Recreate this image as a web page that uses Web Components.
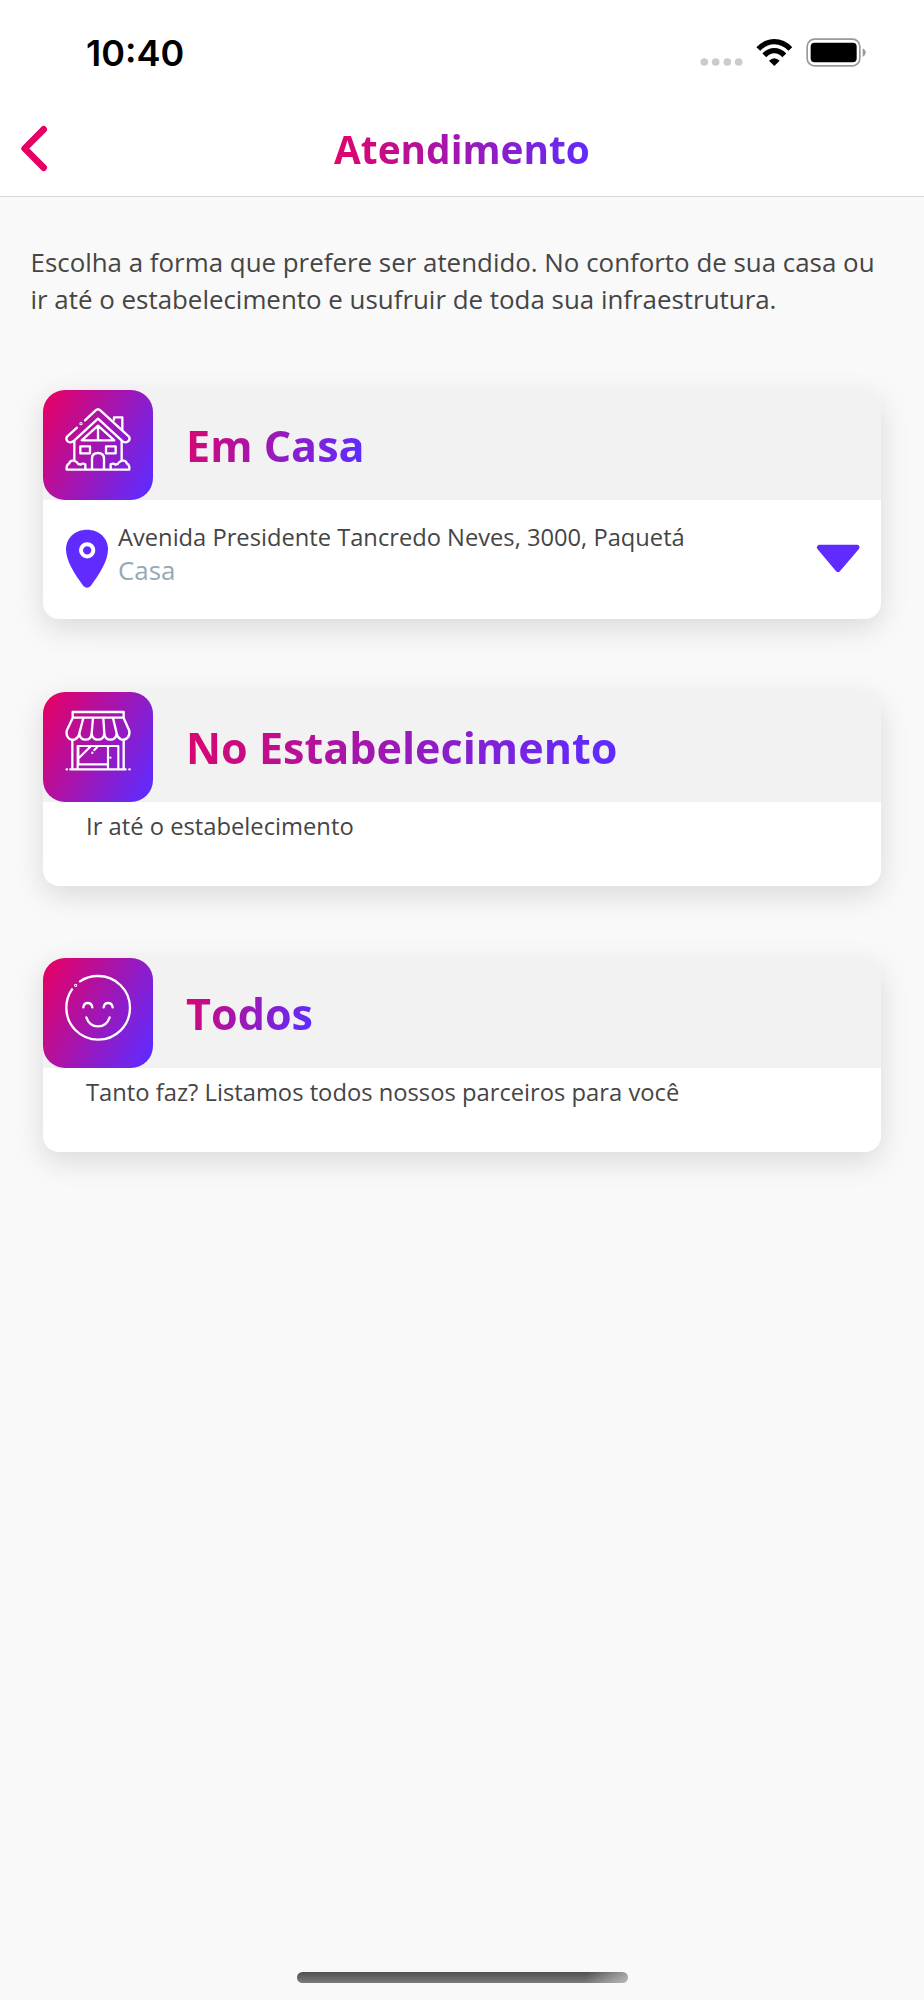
<!DOCTYPE html>
<html lang="pt-BR">
<head>
<meta charset="utf-8">
<title>Atendimento</title>
<style>
html,body{margin:0;background:#f9f9f9}
body{width:924px;height:2000px;overflow:hidden;font-family:"Open Sans","Noto Sans",sans-serif}
</style>
</head>
<body>
<app-screen></app-screen>
<script>
const define=(name,html)=>customElements.define(name,class extends HTMLElement{
  constructor(){super();this.attachShadow({mode:'open'}).innerHTML=html;}
});

define('status-bar',`<style>
:host{display:flex;align-items:center;justify-content:space-between;height:106px;box-sizing:border-box;padding:0 56.5px 0 86px;background:#fff;color:#000}
time{font:600 36px/44px Inter,sans-serif;}
svg{display:block}
</style><time>10:40</time>
<svg width="168" height="32" viewBox="0 0 504 96">
<g fill="#cbcbcb"><circle cx="13" cy="75" r="11.5"/><circle cx="47" cy="75" r="11.5"/><circle cx="82" cy="75" r="11.5"/><circle cx="116" cy="75" r="11.5"/></g>
<g fill="none" stroke="#000" stroke-width="16"><path d="M175 36Q196 14 223 14Q250 14 271 36"/><path d="M193 55Q206 41 223 41Q240 41 253 55"/></g>
<path d="M207 71Q223 56 239 71L223 87Z"/>
<rect x="321.500" y="6.500" width="158" height="80" rx="22" fill="none" stroke="#999" stroke-width="5"/>
<rect x="332" y="17" width="138" height="59" rx="12"/>
<path d="M488 34Q497 38 497 46Q497 55 488 60Z" fill="#999"/>
</svg>`);

define('nav-bar',`<style>
:host{display:grid;grid-template-columns:80px 1fr 80px;height:90px;background:#fff;border-bottom:1px solid #d8d8d8}
svg{display:block}
h1{margin:0;justify-self:center;align-self:start;font-size:38.8px;line-height:54px;padding-top:16px;font-weight:700;white-space:nowrap}
h1 span{background:linear-gradient(90deg,#e0046a,#5f2bff);-webkit-background-clip:text;background-clip:text;color:transparent}
</style><svg width="80" height="90" viewBox="0 318 240 270"><path d="M131 388L74 445.500L131 503" fill="none" stroke="#e60064" stroke-width="20" stroke-linecap="round" stroke-linejoin="round"/></svg>
<h1><span><slot></slot></span></h1>`);

define('option-card',`<style>
:host{display:block;border-radius:16px;background:#fff;box-shadow:0 9px 30px rgba(0,0,0,.13)}
header{display:flex;height:110px;background:#f2f2f2;border-radius:16px 16px 0 0}
.tile{width:110px;height:110px;border-radius:22px;background:linear-gradient(118deg,#e60064 3%,#5f2bff 95%)}
h2{margin:0 0 0 33px;font-size:43.1px;line-height:60px;padding-top:26px;font-weight:700;white-space:nowrap}
h2 span{background:linear-gradient(110deg,#dc056c,#5f2bff 94%);-webkit-background-clip:text;background-clip:text;color:transparent}
</style><header><div class="tile"><slot name="icon"></slot></div><h2><span><slot name="title"></slot></span></h2></header><slot></slot>`);

const icon=(name,vb,body)=>define(name,`<style>:host{display:block}svg{display:block;fill:none;stroke:#fff;stroke-width:7;stroke-linecap:round;stroke-linejoin:round}</style><svg width="110" height="110" viewBox="${vb}">${body}</svg>`);
icon('icon-house','40 30 330 330',`
<path d="M166 121L198 91Q205 84 212 91L297 169Q302 175 298 182Q289 191 279 184L205 116L131 184Q120 191 112 182Q108 175 113 169L142 143"/>
<circle cx="154" cy="131" r="1.500"/>
<path d="M253 119V112H278V148M134 184V241M276 184V241M205 137V181M205 137L156 181H254Z"/>
<path d="M152 199H181V220H152ZM229 199H258V220H229Z"/>
<path d="M187 268V236Q187 219 205 219Q223 219 223 236V268M112 269H299Q301 255 291 250Q289 240 278 242Q268 244 264 252Q259 253 257 254Q251 248 243 253V266M111 269Q109 255 119 250Q121 240 132 242Q142 244 146 252Q151 253 153 254Q159 248 167 253V266"/>`);
icon('icon-store','40 36 330 330',`
<path d="M129 96H282V113H129ZM129 114L111 152Q109 170 119 176Q128 181 136 178Q147 173 149 160Q151 179 168 179Q184 179 186 160Q188 179 205 179Q222 179 224 160Q226 179 242 179Q259 179 261 160Q263 173 274 178Q285 181 293 174Q301 166 299 152L282 114M161 114L149 160M190 114L186 160M221 114L224 160M250 114L261 160"/>
<path d="M128 181V266M282 181V266M122 268H288M111 268H112M299 268H300" />
<path d="M144 266V198H266V266M144 253H233M235 199V266M147 235L181 201M188 218L188 219M194 210L202 202M242 233H242.500M146 200V252" stroke-width="6.500"/>`);
icon('icon-smile','40 24 330 330',`
<path d="M151 94Q174 78 205 78A95.500 95.500 0 1 1 110 173Q110 142 127 118"/><circle cx="138" cy="106" r="1.500"/>
<path d="M161 172Q163 159 174 159Q186 159 188 172M222 172Q224 159 235 159Q247 159 249 172M170 202Q179 229 205 229Q231 229 240 202"/>`);

define('address-row',`<style>
:host{display:grid;grid-template-columns:75px 1fr 86px;height:119px;color:#454545}
svg{display:block}
.t{padding-top:20px;white-space:nowrap}
.a{font-size:23.7px;line-height:34px}.b{font-size:25.9px;line-height:32px;color:#94aab5}
</style><svg width="75" height="119" viewBox="129 30 225 357"><path d="M261 119C297 119 324 144 324 178C324 212 299 252 272 288Q261 299 250 288C223 252 198 212 198 178C198 144 225 119 261 119Z" fill="#5f2bff"/><circle cx="261.500" cy="181" r="18.500" fill="none" stroke="#fff" stroke-width="12"/></svg>
<div class="t"><div class="a"><slot></slot></div><div class="b"><slot name="label"></slot></div></div>
<svg width="86" height="119" viewBox="585 390 258 357"><path d="M658 532H771L714 599Z" fill="#5f2bff" stroke="#5f2bff" stroke-width="15" stroke-linejoin="round"/></svg>`);

define('card-note',`<style>
:host{display:block;height:84px;box-sizing:border-box;padding:7px 0 0 43px;font-size:23.75px;line-height:34px;color:#454545;white-space:nowrap}
</style><slot></slot>`);

define('home-indicator',`<style>
:host{display:block;width:331px;height:11px;border-radius:6px;background:linear-gradient(105deg,transparent 87%,#f9f9f980 100%),linear-gradient(#505050,#7c7c7c)}
</style>`);

define('app-screen',`<style>
:host{display:flex;flex-direction:column;height:2000px;background:#f9f9f9}
p{margin:0;padding:47px 20px 0 30.5px;font-size:25.9px;line-height:37px;color:#454545;white-space:nowrap}
main{display:flex;flex-direction:column;gap:72px;padding:72px 43px 0}
main>:first-child{margin-bottom:1px}
home-indicator{margin:auto auto 17px 297px}
</style><status-bar></status-bar><nav-bar>Atendimento</nav-bar>
<p>Escolha a forma que prefere ser atendido. No conforto de sua casa ou<br>ir até o estabelecimento e usufruir de toda sua infraestrutura.</p>
<main>
<option-card><icon-house slot="icon"></icon-house><span slot="title">Em Casa</span><address-row>Avenida Presidente Tancredo Neves, 3000, Paquetá<span slot="label">Casa</span></address-row></option-card>
<option-card><icon-store slot="icon"></icon-store><span slot="title">No Estabelecimento</span><card-note>Ir até o estabelecimento</card-note></option-card>
<option-card><icon-smile slot="icon"></icon-smile><span slot="title">Todos</span><card-note>Tanto faz? Listamos todos nossos parceiros para você</card-note></option-card>
</main>
<home-indicator></home-indicator>`);
</script>
</body>
</html>
